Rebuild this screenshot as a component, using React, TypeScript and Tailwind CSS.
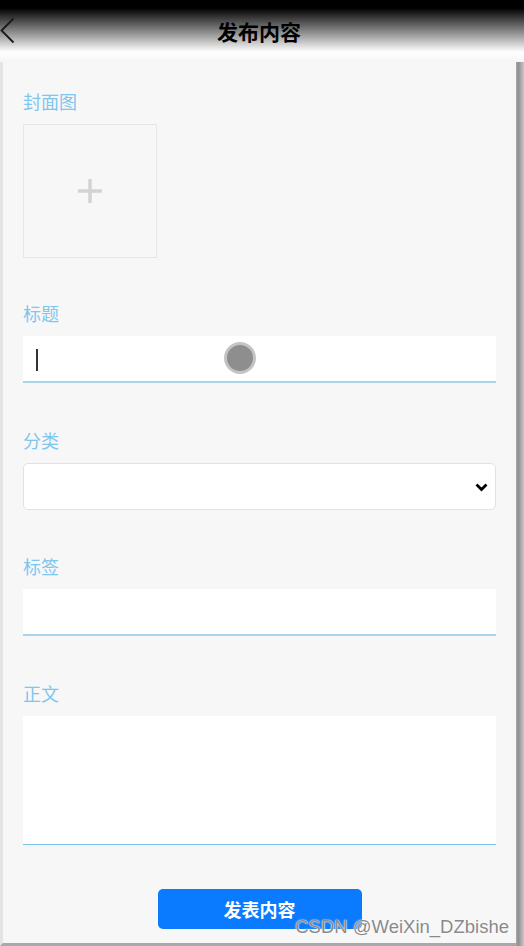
import { useState } from 'react';

const cjk = "font-['Microsoft_YaHei','Noto_Sans_CJK_SC',sans-serif]";

function Label({ children }: { children: string }) {
  return <div className={`${cjk} text-[18px] leading-[24px] text-[#7fc6ef] mb-[11px]`}>{children}</div>;
}

export default function App() {
  const [title, setTitle] = useState('');
  const [tags, setTags] = useState('');
  const [body, setBody] = useState('');

  return (
    <div className="w-[524px] h-[946px] flex flex-col bg-[#f7f7f7] overflow-hidden relative">
      {/* top bar */}
      <div className="h-[62px] shrink-0 relative flex items-start justify-center bg-[linear-gradient(to_bottom,#000_0px,#000_8px,#fff_52px,#f5f5f5_62px)]">
        <svg className="absolute left-0 top-[17px]" width="16" height="27" viewBox="0 0 16 27">
          <path d="M13.5 1.5 L1.5 13.5 L13.5 25.5" fill="none" stroke="#1a1a1a" strokeWidth="1.8" />
        </svg>
        <h1 className={`${cjk} mt-[17px] mr-[6px] text-[21px] leading-[28px] font-bold text-black`}>发布内容</h1>
      </div>

      <div className="flex-1 flex min-h-0">
        <div className="flex-1 border-l-[3px] border-l-[#e4e4e4] border-b-[3px] border-b-[#a9a9a9] pl-[20px] pr-[20px] pt-[27px]">
          <section className="mb-[43px]">
            <Label>封面图</Label>
            <button className="w-[134px] h-[134px] border border-[#e6e6e6] bg-[#f7f7f7] flex items-center justify-center">
              <svg width="26" height="26" viewBox="0 0 26 26">
                <path d="M13 1 V25 M1 13 H25" stroke="#d3d3d3" strokeWidth="3.5" />
              </svg>
            </button>
          </section>

          <section className="mb-[45px]">
            <Label>标题</Label>
            <div className="relative">
              <input
                value={title}
                onChange={(e) => setTitle(e.target.value)}
                className="w-full h-[47px] bg-white border-b-2 border-[#a8d5ec] outline-none px-[13px] text-[16px]"
              />
              <span className="absolute left-[13px] top-[13px] w-[2px] h-[22px] bg-[#333]" />
              <span className="absolute left-[201px] top-[6px] w-[32px] h-[32px] rounded-full bg-[#8e8e8e] border-[3px] border-[#c4c4c4]" />
            </div>
          </section>

          <section className="mb-[44px]">
            <Label>分类</Label>
            <div className="relative">
              <select className="w-full h-[47px] bg-white border border-[#e2e2e2] rounded-[5px] appearance-none outline-none px-[12px]">
                <option value=""></option>
              </select>
              <svg className="absolute right-[8px] top-[20px] pointer-events-none" width="13" height="9" viewBox="0 0 13 9">
                <path d="M1.5 1.5 L6.5 6.5 L11.5 1.5" fill="none" stroke="#000" strokeWidth="2.8" />
              </svg>
            </div>
          </section>

          <section className="mb-[45px]">
            <Label>标签</Label>
            <input
              value={tags}
              onChange={(e) => setTags(e.target.value)}
              className="block w-full h-[47px] bg-white border-b-2 border-[#a8d5ec] outline-none px-[13px] text-[16px]"
            />
          </section>

          <section className="mb-[44px]">
            <Label>正文</Label>
            <textarea
              value={body}
              onChange={(e) => setBody(e.target.value)}
              className="block w-full h-[129px] bg-white border-0 border-b-[1.5px] border-b-[#7cc2ee] outline-none resize-none p-[13px] text-[16px]"
            />
          </section>

          <div className="flex justify-center">
            <button className={`${cjk} w-[204px] h-[40px] rounded-[5px] bg-[#0a7bff] text-white text-[18px] font-bold`}>
              发表内容
            </button>
          </div>
        </div>
        <div className="w-[8px] shrink-0 bg-[linear-gradient(to_right,#a8a8a8,#8f8f8f_30%,#c8c8c8)]" />
      </div>

      <div className="absolute right-[15px] bottom-[8px] font-['Liberation_Sans',Arial,sans-serif] text-[18.5px] leading-[22px] text-[#8a8a8a] [text-shadow:0_0_2px_#fff,0_0_1px_#fff] pointer-events-none">
        CSDN @WeiXin_DZbishe
      </div>
    </div>
  );
}
